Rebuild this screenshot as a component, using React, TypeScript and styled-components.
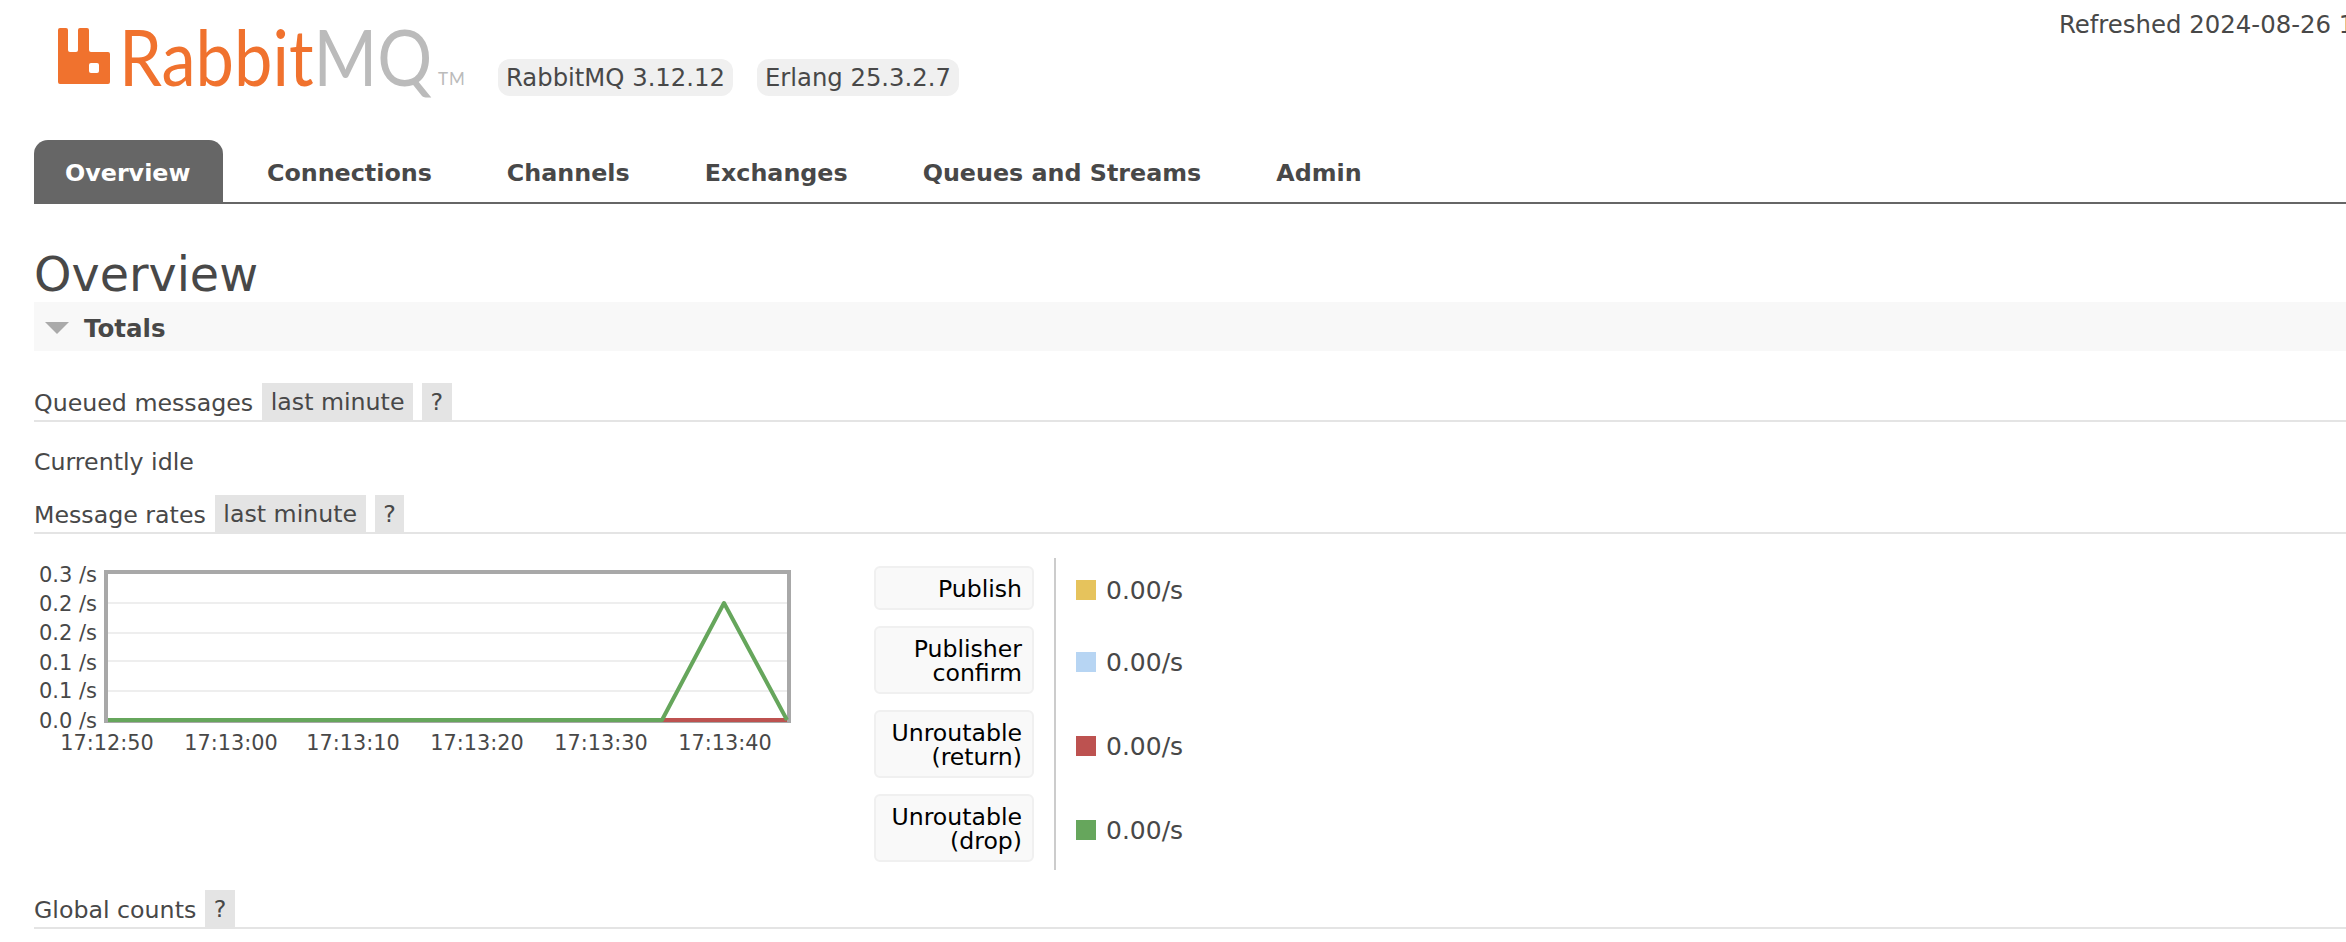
import React from 'react'
import styled, { createGlobalStyle } from 'styled-components'

const GlobalStyle = createGlobalStyle`
  html, body {
    margin: 0;
    padding: 0;
    height: 100%;
    overflow: hidden;
    background: #fff;
  }
  body {
    color: #484848;
    font: 400 24px 'DejaVu Sans', Verdana, sans-serif;
  }
`

const tabs = ['Overview', 'Connections', 'Channels', 'Exchanges', 'Queues and Streams', 'Admin']

const legend = [
  { label: ['Publish'], color: '#e6c35c' },
  { label: ['Publisher', 'confirm'], color: '#b7d5f3' },
  { label: ['Unroutable', '(return)'], color: '#bd5250' },
  { label: ['Unroutable', '(drop)'], color: '#66a65c' },
]

const yTicks = [
  { label: '0.3 /s', y: 35 },
  { label: '0.2 /s', y: 64 },
  { label: '0.2 /s', y: 93 },
  { label: '0.1 /s', y: 123 },
  { label: '0.1 /s', y: 151 },
  { label: '0.0 /s', y: 181 },
]
const xTicks = [
  { label: '17:12:50', x: 73 },
  { label: '17:13:00', x: 197 },
  { label: '17:13:10', x: 319 },
  { label: '17:13:20', x: 443 },
  { label: '17:13:30', x: 567 },
  { label: '17:13:40', x: 691 },
]

function Chart() {
  return (
    <ChartSvg viewBox="0 0 800 220" width="800" height="220">
      {[63, 93, 121, 151].map(y => (
        <line key={y} x1="72" x2="754" y1={y} y2={y} stroke="#eee" strokeWidth="2" />
      ))}
      <rect x="72" y="32" width="683" height="149" fill="none" stroke="#a8a8a8" strokeWidth="4" />
      <path d="M628 180H753" stroke="#bd5250" strokeWidth="4" fill="none" />
      <path d="M74 180H628L690 63L753 180" stroke="#66a65c" strokeWidth="4" fill="none" strokeLinejoin="round" />
      {yTicks.map((t, i) => (
        <text key={i} x="63" y={t.y + 7} textAnchor="end" fontSize="21" fill="#484848">
          {t.label}
        </text>
      ))}
      {xTicks.map(t => (
        <text key={t.label} x={t.x} y="210" textAnchor="middle" fontSize="20.8" fill="#484848">
          {t.label}
        </text>
      ))}
    </ChartSvg>
  )
}

export default function App() {
  return (
    <>
      <GlobalStyle />
      <Page>
        <Header>
          <Logo>
            <svg width="52" height="56" viewBox="0 0 52 56">
              <path
                fill="#f0722e"
                fillRule="evenodd"
                d="M2 0h6a2 2 0 0 1 2 2v20a2 2 0 0 0 2 2h6a2 2 0 0 0 2-2V2a2 2 0 0 1 2-2h7a2 2 0 0 1 2 2v20a2 2 0 0 0 2 2h17a2 2 0 0 1 2 2v28a2 2 0 0 1-2 2H2a2 2 0 0 1-2-2V2a2 2 0 0 1 2-2zM33 35a2 2 0 0 0-2 2v6a2 2 0 0 0 2 2h6a2 2 0 0 0 2-2v-6a2 2 0 0 0-2-2z"
              />
            </svg>
            <Wordmark>
              Rabbit<WordmarkGrey>MQ</WordmarkGrey>
            </Wordmark>
            <Trademark>TM</Trademark>
          </Logo>
          <Versions>
            <Version>RabbitMQ 3.12.12</Version>
            <Version>Erlang 25.3.2.7</Version>
          </Versions>
          <Refreshed>Refreshed 2024-08-26 17:13:45</Refreshed>
        </Header>

        <Tabs>
          {tabs.map((tab, i) => (
            <Tab key={tab} $active={i === 0}>
              {tab}
            </Tab>
          ))}
        </Tabs>

        <Title>Overview</Title>

        <SectionBar>
          <Triangle />
          Totals
        </SectionBar>

        <SubHeading $first>
          Queued messages
          <Chip>last minute</Chip>
          <Chip>?</Chip>
        </SubHeading>
        <Idle>Currently idle</Idle>
        <SubHeading>
          Message rates
          <Chip>last minute</Chip>
          <Chip>?</Chip>
        </SubHeading>

        <RatesRow>
          <Chart />
          <Legend>
            {legend.map(item => (
              <LegendRow key={item.label.join(' ')}>
                <LegendCell>
                  <LegendLabel>
                    {item.label.map(line => (
                      <div key={line}>{line}</div>
                    ))}
                  </LegendLabel>
                </LegendCell>
                <LegendValue>
                  <Swatch $color={item.color} />
                  0.00/s
                </LegendValue>
              </LegendRow>
            ))}
          </Legend>
        </RatesRow>

        <SubHeading>
          Global counts
          <Chip>?</Chip>
        </SubHeading>
      </Page>
    </>
  )
}

const Page = styled.div`
  padding-left: 34px;
  white-space: nowrap;
`

const Header = styled.header`
  display: flex;
  align-items: flex-start;
  height: 140px;
`

const Logo = styled.div`
  display: flex;
  flex: none;
  align-items: flex-start;
  width: 440px;
  margin: 28px 0 0 24px;
  svg {
    flex: none;
  }
`

const Wordmark = styled.span`
  display: inline-block;
  flex: none;
  width: 314px;
  margin: -11px 0 0 9px;
  color: #f0722e;
  font: 400 78px/78px Lato, sans-serif;
  transform: scaleX(0.88);
  transform-origin: left top;
`

const WordmarkGrey = styled.span`
  color: #bbb;
`

const Trademark = styled.span`
  margin: 42px 0 0 5px;
  color: #bbb;
  font: 400 17px/17px Lato, sans-serif;
  letter-spacing: 1px;
`

const Versions = styled.div`
  display: flex;
  flex: none;
  gap: 24px;
  margin-top: 59px;
`

const Version = styled.span`
  padding: 0 8px;
  background: #f0f0f0;
  border-radius: 12px;
  font-size: 24.3px;
  line-height: 37px;
`

const Refreshed = styled.span`
  flex: none;
  margin-left: 1100px;
  margin-top: 10px;
  font-size: 24.4px;
  line-height: 30px;
`

const Tabs = styled.nav`
  display: flex;
  height: 62px;
  border-bottom: 2px solid #666;
`

const Tab = styled.a<{ $active?: boolean }>`
  height: 62px;
  padding: 0 ${p => (p.$active ? '32.5px' : '31px')} 0 31px;
  margin-right: 13px;
  font-size: 23.8px;
  font-weight: 700;
  line-height: 66px;
  border-radius: 14px 14px 0 0;
  color: ${p => (p.$active ? '#fff' : '#484848')};
  background: ${p => (p.$active ? '#666' : 'transparent')};
`

const Title = styled.h1`
  margin: 0;
  height: 98px;
  padding-top: 33px;
  box-sizing: border-box;
  font-size: 47.6px;
  font-weight: 400;
  line-height: 76px;
  color: #484848;
`

const SectionBar = styled.div`
  display: flex;
  align-items: center;
  gap: 15px;
  box-sizing: border-box;
  height: 49px;
  padding: 3px 0 0 11px;
  background: #f8f8f8;
  font-size: 24.5px;
  font-weight: 700;
`

const Triangle = styled.span`
  border-top: 12px solid #aaa;
  border-left: 12px solid transparent;
  border-right: 12px solid transparent;
`

const SubHeading = styled.h3<{ $first?: boolean }>`
  display: flex;
  align-items: center;
  gap: 9px;
  height: 34px;
  padding-top: 3px;
  margin: ${p => (p.$first ? '32px' : '0')} 0 0;
  border-bottom: 2px solid #e4e4e4;
  font-size: 23.7px;
  font-weight: 400;
`

const Chip = styled.span`
  align-self: flex-end;
  height: 38px;
  margin-bottom: -1px;
  padding: 0 8.5px;
  background: #e4e4e4;
  line-height: 39px;
`

const Idle = styled.p`
  margin: 0;
  height: 73px;
  font-size: 23.7px;
  line-height: 80px;
`

const RatesRow = styled.div`
  display: flex;
  align-items: flex-start;
  height: 356px;
  padding-top: 24px;
  box-sizing: border-box;
`

const ChartSvg = styled.svg`
  flex: none;
  margin-top: -18px;
  font-family: 'DejaVu Sans', Verdana, sans-serif;
`

const Legend = styled.div`
  margin-left: 40px;
`

const LegendRow = styled.div`
  display: flex;
  align-items: stretch;
`

const LegendCell = styled.div`
  padding: 8px 20px 8px 0;
  border-right: 2px solid #ccc;
`

const LegendLabel = styled.div`
  box-sizing: border-box;
  width: 160px;
  padding: 9px 10px 7px;
  background: #f9f9f9;
  border: 2px solid #f0f0f0;
  border-radius: 6px;
  color: #000;
  font-size: 23.6px;
  line-height: 24px;
  text-align: right;
`

const LegendValue = styled.div`
  display: flex;
  align-items: center;
  gap: 10px;
  padding: 4px 0 0 20px;
  font-size: 25px;
`

const Swatch = styled.span<{ $color: string }>`
  width: 20px;
  height: 20px;
  background: ${p => p.$color};
`
